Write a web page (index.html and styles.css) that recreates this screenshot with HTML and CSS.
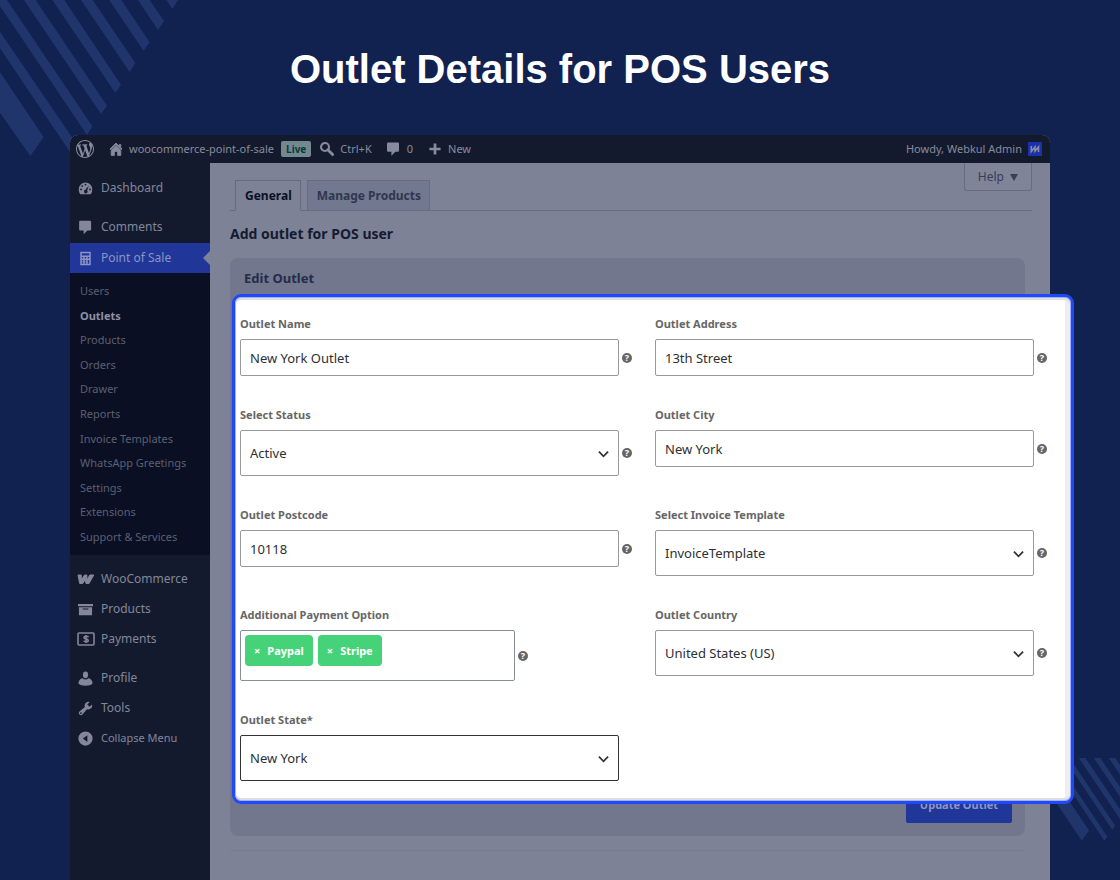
FILE: index.html
```html
<!DOCTYPE html>
<html lang="en">
<head>
<meta charset="utf-8">
<meta name="viewport" content="width=device-width, initial-scale=1">
<title>Outlet Details for POS Users</title>
<link rel="stylesheet" href="styles.css">
</head>
<body>
<svg class="stripes stripes-top" viewBox="0 0 540 480" aria-hidden="true">
  <path d="M499 0H534L517 27ZM414 0H449L492 63L474 90ZM328 0H364L449 127L431 153ZM243 0H278L406 189L389 216ZM157 0H193L363 254L346 279ZM72 0H107L321 317L303 342ZM0 0H21L277 379L261 405L0 18ZM0 95L236 441L218 468L0 145ZM0 217L131 411L91 468L0 338Z"/>
</svg>
<svg class="stripes stripes-bottom" viewBox="0 0 283 249" aria-hidden="true">
  <path d="M0 0H43L190 218L168 249ZM68 0H86L245 237L236 249ZM114 0H131L268 203L260 217ZM159 0H179L283 154V184ZM204 0H224L283 87V117ZM249 0H269L283 21V50Z"/>
</svg>

<header class="hero"><h1>Outlet Details for POS Users</h1></header>

<div class="window">
  <nav class="adminbar" aria-label="Toolbar">
    <a href="#" class="wp" aria-label="WordPress">
      <svg viewBox="0 0 20 20" width="18" height="18"><path fill-rule="evenodd" d="M20 10c0-5.51-4.49-10-10-10C4.48 0 0 4.49 0 10c0 5.52 4.48 10 10 10 5.51 0 10-4.48 10-10zM7.78 15.37L4.37 6.22c.55-.02 1.17-.08 1.17-.08.5-.06.44-1.13-.06-1.11 0 0-1.45.11-2.37.11-.18 0-.37 0-.58-.01C4.12 2.69 6.87 1.11 10 1.11c2.33 0 4.45.87 6.05 2.34-.68-.11-1.65.39-1.65 1.58 0 .74.45 1.36.9 2.1.35.61.55 1.36.55 2.46 0 1.49-1.4 5-1.4 5l-3.03-8.37c.54-.02.82-.17.82-.17.5-.05.44-1.25-.06-1.22 0 0-1.44.12-2.38.12-.87 0-2.33-.12-2.33-.12-.5-.03-.56 1.2-.06 1.22l.92.08 1.26 3.41zM17.41 10c.24-.64.74-1.87.43-4.25.7 1.29 1.05 2.71 1.05 4.25 0 3.29-1.73 6.24-4.4 7.78.97-2.59 1.94-5.2 2.92-7.78zM6.1 18.09C3.12 16.65 1.11 13.53 1.11 10c0-1.3.23-2.48.72-3.59C3.25 10.3 4.67 14.2 6.1 18.09zm4.03-6.63l2.58 6.98c-.86.29-1.76.45-2.71.45-.79 0-1.57-.11-2.29-.33.81-2.38 1.62-4.74 2.42-7.1z"/></svg>
    </a>
    <a href="#" class="site">
      <svg viewBox="0 0 20 20" width="16" height="16"><path d="M16 8.5l1.53 1.53-1.06 1.06L10 4.6l-6.47 6.49-1.06-1.06L10 2.5l4 4v-2h2v4zm-6-2.46l6 5.99V18h-4v-5H8v5H4v-5.97z" stroke="currentColor"/></svg>
      woocommerce-point-of-sale
    </a>
    <span class="live">Live</span>
    <a href="#" class="find">
      <svg viewBox="0 0 20 20" width="16" height="16"><circle cx="7.500" cy="7.500" r="5" fill="none" stroke="currentColor" stroke-width="2.600"/><path d="M11 11l6 6" stroke="currentColor" stroke-width="3.600" stroke-linecap="round"/></svg>
      Ctrl+K
    </a>
    <a href="#" class="talk">
      <svg viewBox="0 0 20 20" width="16" height="16"><path d="M4 2h12q1.500 0 1.500 1.500v8.500q0 1.500-1.500 1.500h-3l-5 5v-5H4q-1.500 0-1.500-1.500V3.500q0-1.500 1.500-1.500z"/></svg>
      0
    </a>
    <a href="#" class="new">
      <svg viewBox="0 0 20 20" width="16" height="16"><path d="M8.300 3h3.400v5.300H17v3.400h-5.300V17H8.300v-5.300H3V8.300h5.300z"/></svg>
      New
    </a>
    <a href="#" class="account">Howdy, Webkul Admin
      <svg viewBox="0 0 14 14" width="14" height="14"><path class="avatar-bg" d="M0 0h14v14H0z"/><path d="M3.300 4v5.500L7 5v4l3.500-4v5" fill="none" stroke="currentColor" stroke-width="1.600"/></svg>
    </a>
  </nav>

  <div class="body">
    <nav class="sidebar" aria-label="Main menu">
      <ul class="menu">
        <li><a href="#"><svg viewBox="0 0 20 20"><path fill-rule="evenodd" d="M2.900 17.500h14.200A9.300 9.300 0 0 0 19 11a9 9 0 0 0-18 0c0 2.600.6 4.700 1.900 6.500zM10 3.500a1.200 1.200 0 1 1 0 2.400 1.200 1.200 0 0 1 0-2.400zM5.500 5.500a1.200 1.200 0 1 1 0 2.400 1.200 1.200 0 0 1 0-2.400zm9 .5-2.300 6.500a2.400 2.400 0 1 1-2.300-.7zM4 10a1.200 1.200 0 1 1 0 2.400A1.200 1.200 0 0 1 4 10zm12 0a1.200 1.200 0 1 1 0 2.400 1.200 1.200 0 0 1 0-2.400z"/></svg>Dashboard</a></li>
        <li class="spaced"><a href="#"><svg viewBox="0 0 20 20"><path d="M3 1h13q1.500 0 1.500 1.500v10q0 1.500-1.500 1.500h-3.500l-5 5v-5H3q-1.500 0-1.500-1.500v-10Q1.500 1 3 1z"/></svg>Comments</a></li>
        <li class="current"><a href="#"><svg viewBox="0 0 20 20"><path fill-rule="evenodd" d="M3 1h14v18H3zM5 3v3h10V3zM5 8v2h2V8zm4 0v2h2V8zm4 0v2h2V8zM5 12v2h2v-2zm4 0v2h2v-2zm4 0v5h2v-5zM5 15v2h2v-2zm4 0v2h2v-2z"/></svg>Point of Sale</a></li>
      </ul>
      <ul class="submenu">
        <li><a href="#">Users</a></li>
        <li><a href="#" class="here">Outlets</a></li>
        <li><a href="#">Products</a></li>
        <li><a href="#">Orders</a></li>
        <li><a href="#">Drawer</a></li>
        <li><a href="#">Reports</a></li>
        <li><a href="#">Invoice Templates</a></li>
        <li><a href="#">WhatsApp Greetings</a></li>
        <li><a href="#">Settings</a></li>
        <li><a href="#">Extensions</a></li>
        <li><a href="#">Support &amp; Services</a></li>
      </ul>
      <ul class="menu">
        <li class="spaced"><a href="#"><svg class="wide" viewBox="0 0 18 16"><path d="M1 4H4.200L4.400 9 7.500 4H9.800L10 9 12.800 4H16.800L12 12.500H9L8.200 8.500 5.800 12.500H2.700Z" stroke="currentColor" stroke-linejoin="round"/></svg>WooCommerce</a></li>
        <li><a href="#"><svg viewBox="0 0 16 16"><path fill-rule="evenodd" d="M0 2h16v2.500H0zM1 5.500h14V14H1zM5 7v1h6V7z"/></svg>Products</a></li>
        <li><a href="#"><svg class="wide" viewBox="0 0 18 16"><rect x="1" y="2" width="16" height="12" rx="1" fill="none" stroke="currentColor" stroke-width="1.600"/><path d="M11.500 6.200C11 5 7 4.800 7 6.700 7 8.300 11.300 7.500 11.300 9.400 11.300 11.200 7.200 11 6.700 9.800M9 4v8" fill="none" stroke="currentColor" stroke-width="1.500"/></svg>Payments</a></li>
        <li class="spaced"><a href="#"><svg viewBox="0 0 20 20"><ellipse cx="10" cy="5" rx="3.500" ry="4.500"/><path d="M6 9.500q4 3.500 8 0 5 1 5.500 7-3 3-9.500 3t-9.500-3q.5-6 5.500-7z"/></svg>Profile</a></li>
        <li><a href="#"><svg viewBox="1 1 18 18"><path fill-rule="evenodd" d="M16.680 9.770c-1.340 1.340-3.300 1.670-4.950.99l-5.410 6.520c-.99.990-2.590.990-3.580 0s-.99-2.590 0-3.570l6.520-5.420c-.68-1.650-.35-3.610.99-4.950 1.280-1.280 3.120-1.620 4.720-1.060l-2.890 2.890 2.820 2.820 2.860-2.870c.53 1.580.18 3.390-1.080 4.650zM3.810 16.210c.4.390 1.040.390 1.430 0 .4-.4.400-1.040 0-1.430-.39-.4-1.030-.4-1.430 0-.39.390-.39 1.030 0 1.430z"/></svg>Tools</a></li>
        <li><a href="#" class="collapse"><svg viewBox="0 0 20 20"><path fill-rule="evenodd" d="M10 .5a9.500 9.500 0 1 1 0 19 9.500 9.500 0 0 1 0-19zM12.500 5.500L6.500 10l6 4.500z"/></svg>Collapse Menu</a></li>
      </ul>
    </nav>

    <main class="content">
      <div class="page-head">
        <div class="tabs">
          <a href="#" class="tab active">General</a>
          <a href="#" class="tab">Manage Products</a>
        </div>
        <button type="button" class="help-tab">Help <svg viewBox="0 0 8 8" width="8" height="8" aria-hidden="true"><path d="M0 1h8L4 8z"/></svg></button>
      </div>
      <h2>Add outlet for POS user</h2>

      <section class="card">
        <h3>Edit Outlet</h3>
        <form class="spotlight" id="outlet">
          <div class="field">
            <label for="name">Outlet Name</label>
            <div class="row"><input id="name" type="text" value="New York Outlet"><button type="button" class="tip" aria-label="Help">?</button></div>
          </div>
          <div class="field">
            <label for="address">Outlet Address</label>
            <div class="row"><input id="address" type="text" value="13th Street"><button type="button" class="tip" aria-label="Help">?</button></div>
          </div>
          <div class="field">
            <label for="status">Select Status</label>
            <div class="row"><div class="pick"><select id="status"><option>Active</option></select><svg viewBox="0 0 12 8"><path d="M1 1.500l5 5 5-5"/></svg></div><button type="button" class="tip" aria-label="Help">?</button></div>
          </div>
          <div class="field">
            <label for="city">Outlet City</label>
            <div class="row"><input id="city" type="text" value="New York"><button type="button" class="tip" aria-label="Help">?</button></div>
          </div>
          <div class="field">
            <label for="postcode">Outlet Postcode</label>
            <div class="row"><input id="postcode" type="text" value="10118"><button type="button" class="tip" aria-label="Help">?</button></div>
          </div>
          <div class="field">
            <label for="template">Select Invoice Template</label>
            <div class="row"><div class="pick"><select id="template"><option>InvoiceTemplate</option></select><svg viewBox="0 0 12 8"><path d="M1 1.500l5 5 5-5"/></svg></div><button type="button" class="tip" aria-label="Help">?</button></div>
          </div>
          <div class="field">
            <label id="payment-label">Additional Payment Option</label>
            <div class="row"><div class="chips" role="group" aria-labelledby="payment-label"><button type="button" class="chip"><span>×</span>Paypal</button><button type="button" class="chip"><span>×</span>Stripe</button></div><button type="button" class="tip" aria-label="Help">?</button></div>
          </div>
          <div class="field">
            <label for="country">Outlet Country</label>
            <div class="row"><div class="pick"><select id="country"><option>United States (US)</option></select><svg viewBox="0 0 12 8"><path d="M1 1.500l5 5 5-5"/></svg></div><button type="button" class="tip" aria-label="Help">?</button></div>
          </div>
          <div class="field">
            <label for="state">Outlet State*</label>
            <div class="row no-tip"><div class="pick"><select id="state" class="strong"><option>New York</option></select><svg viewBox="0 0 12 8"><path d="M1 1.500l5 5 5-5"/></svg></div></div>
          </div>
        </form>
        <div class="actions"><button type="submit" form="outlet" class="primary">Update Outlet</button></div>
      </section>
      <hr>
    </main>
  </div>
</div>
</body>
</html>
```
FILE: styles.css
```css
* { box-sizing: border-box; }
body {
  margin: 0;
  min-height: 100vh;
  display: flex;
  flex-direction: column;
  position: relative;
  background: #112150;
  color: #2a3046;
  font-family: "Noto Sans", "Open Sans", sans-serif;
  font-size: 12px;
  line-height: 18px;
}
a { color: inherit; text-decoration: none; }
ul { list-style: none; margin: 0; padding: 0; }
button, input, select { font: inherit; color: inherit; }
svg { fill: currentColor; flex: none; }
h1, h2, h3 { margin: 0; }

.stripes { position: absolute; color: #20356c; }
.stripes-top { left: 0; top: 0; width: 180px; }
.stripes-bottom { right: 0; bottom: 39px; width: 94px; }

.hero { padding: 45px 16px 42px; text-align: center; color: #fff; position: relative; }
.hero h1 { font: bold 40px/48px "Liberation Sans", Arial, sans-serif; }

.window {
  position: relative;
  flex: 1;
  margin: 0 70px;
  display: flex;
  flex-direction: column;
  border-radius: 8px 8px 0 0;
  background: #7d8297;
}
.adminbar {
  height: 28px;
  display: flex;
  align-items: center;
  padding: 0 8px 0 6px;
  border-radius: 8px 8px 0 0;
  background: #141a2e;
  color: #868b9e;
  font-size: 11px;
}
.adminbar a { display: flex; align-items: center; }
.wp { margin-right: 14px; }
.site { gap: 5px; }
.live {
  margin: 0 8px 0 7px;
  padding: 0 5px;
  border-radius: 2px;
  line-height: 16px;
  font-size: 10px;
  font-weight: bold;
  background: #74898f;
  color: #073c3b;
}
.find { gap: 5px; margin-right: 13px; }
.talk { gap: 6px; margin-right: 14px; }
.new { gap: 5px; }
.account { gap: 6px; margin-left: auto; }
.avatar-bg { fill: #1a32ae; }

.body { flex: 1; display: flex; }
.sidebar {
  width: 140px;
  flex: none;
  padding-top: 10px;
  background: #141a2e;
  color: #82879a;
  font-size: 12px;
}
.menu a { display: flex; align-items: center; height: 30px; padding-left: 8px; gap: 8px; white-space: nowrap; }
.menu svg { width: 15px; height: 15px; }
.menu svg.wide { width: 18px; height: 16px; margin: 0 -2px 0 -1px; }
.menu .spaced { margin-top: 9px; }
.menu .collapse { font-size: 11px; }
.menu .current { position: relative; margin-top: 1px; background: #203698; color: #8b94c4; }
.menu .current::after {
  content: "";
  position: absolute;
  right: 0;
  top: 8px;
  border: 7px solid transparent;
  border-left: 0;
  border-right-color: #7d8297;
}
.submenu {
  display: grid;
  grid-auto-rows: 1fr;
  align-items: center;
  height: 282px;
  padding: 6px 0 6px 10px;
  background: #0a0f23;
  color: #5b6073;
  font-size: 11px;
  white-space: nowrap;
}
.here { font-weight: bold; color: #8c91a3; }

.content { flex: 1; min-width: 0; padding: 0 18px 0 20px; }
.page-head { display: flex; justify-content: space-between; height: 48px; border-bottom: 1px solid #666c82; }
.tabs { display: flex; align-items: flex-end; gap: 6px; padding-left: 5px; }
.tab {
  margin-bottom: -1px;
  height: 31px;
  padding: 0 8px 0 9px;
  border: 1px solid #666c82;
  background: #72788f;
  color: #2f374f;
  font-size: 12px;
  font-weight: bold;
  line-height: 29px;
}
.tab.active { border-bottom-color: #7d8297; background: #7d8297; color: #0a1026; }
.help-tab {
  height: 28px;
  padding: 1px 13px 0;
  display: flex;
  align-items: center;
  gap: 6px;
  border: 1px solid #666c82;
  border-top: 0;
  border-radius: 0 0 3px 3px;
  background: #7f8499;
  color: #373e56;
}
h2 { padding: 11px 0 12px; color: #151b31; font-size: 14px; line-height: 24px; }
.card { margin-right: 7px; padding-bottom: 13px; border-radius: 8px; background: #72778d; }
.card h3 { padding: 11px 14px 7px; color: #242c47; font-size: 13px; line-height: 18px; }

.spotlight {
  position: relative;
  z-index: 1;
  display: grid;
  grid-template-columns: 1fr 1fr;
  gap: 30px 23px;
  margin: 0 -49px -15px 2px;
  padding: 18px 24px 20px 5px;
  border: 3px solid #2149f5;
  border-radius: 9px;
  background: #fff;
  box-shadow: inset 0 0 0 1px #a4b2fb, inset 0 3px #dedede, inset 0 -3px #dedede, inset -6px 0 #eeeeee;
}
.field { display: flex; flex-direction: column; gap: 6px; color: #2c2f33; }
.field label { color: #666; font-size: 11px; font-weight: bold; line-height: 18px; }
.row { display: flex; align-items: center; gap: 3px; }
.no-tip { padding-right: 13px; }
.row input, .row select {
  width: 100%;
  height: 37px;
  padding: 0 9px;
  border: 1px solid #98999c;
  border-radius: 2px;
  background: #fff;
  font-size: 13px;
  outline: 0;
}
.row input { flex: 1; min-width: 0; }
.pick { flex: 1; position: relative; }
.pick select { display: block; height: 46px; appearance: none; }
.pick select.strong { border-color: #333; }
.pick svg { position: absolute; right: 10px; top: 20px; width: 11px; height: 8px; fill: none; stroke: #333; stroke-width: 2; pointer-events: none; }
.tip {
  flex: none;
  width: 10px;
  height: 10px;
  padding: 0;
  border: 0;
  border-radius: 50%;
  background: #666;
  color: #fff;
  font-size: 9px;
  font-weight: bold;
  line-height: 10px;
  text-align: center;
}
.chips { display: flex; align-items: flex-start; gap: 5px; width: 275px; height: 51px; padding: 4px; border: 1px solid #868d96; border-radius: 2px; }
.chip { height: 31px; padding: 0 9px; border: 0; border-radius: 4px; background: #46d278; color: #fff; font-size: 11px; font-weight: bold; }
.chip span { margin-right: 7px; }

.actions { display: flex; justify-content: flex-end; padding-right: 13px; }
.primary { height: 34px; width: 106px; padding: 0 0 2px; border: 0; border-radius: 2px; background: #203698; color: #8f97c2; font-size: 11px; font-weight: bold; }
hr { margin: 14px 7px 0 0; border: 0; border-top: 1px solid #777c92; }
```
